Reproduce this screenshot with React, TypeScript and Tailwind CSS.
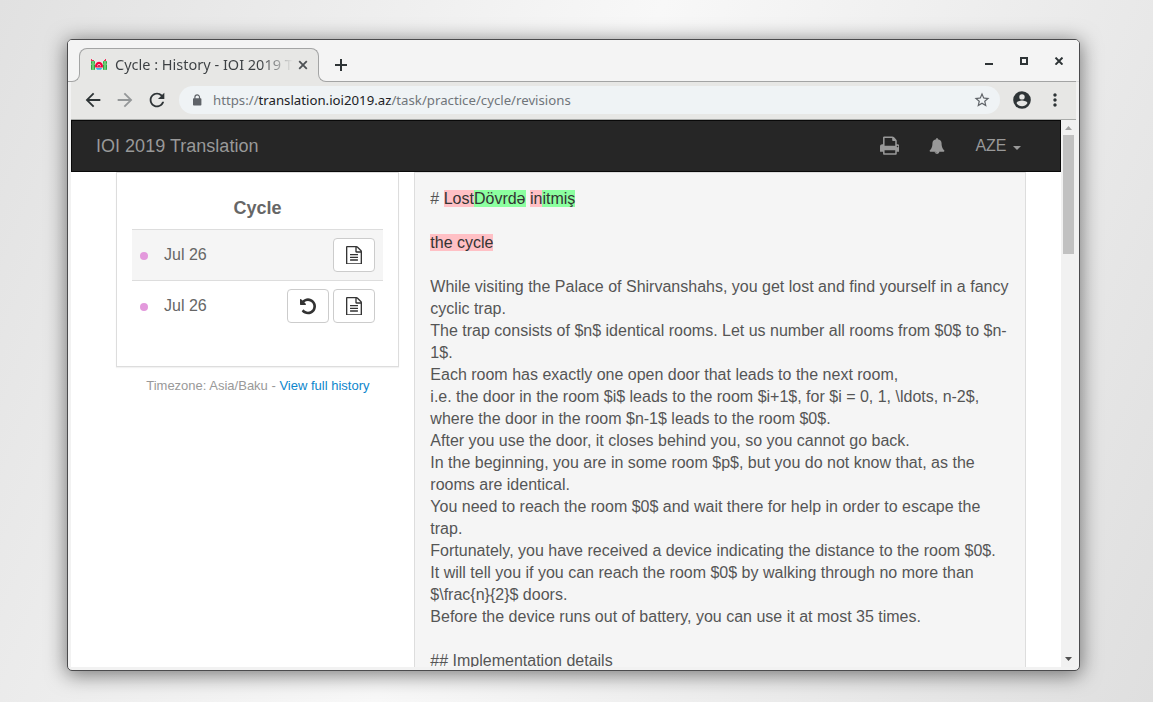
import React from "react";
import { MdArrowBack, MdArrowForward, MdMoreVert, MdRefresh, MdStarBorder } from "react-icons/md";

const FILE_TEXT =
  "M1468 380q28 28 48 76t20 88v1152q0 40-28 68t-68 28h-1344q-40 0-68-28t-28-68v-1600q0-40 28-68t68-28h896q40 0 88 20t76 48zM1024 136v376h376q-10-29-22-41l-313-313q-12-12-41-22zM1408 1664v-1024h-416q-40 0-68-28t-28-68v-416h-768v1536h1280zM384 800q0-14 9-23t23-9h704q14 0 23 9t9 23v64q0 14-9 23t-23 9h-704q-14 0-23-9t-9-23v-64zM1120 1024q14 0 23 9t9 23v64q0 14-9 23t-23 9h-704q-14 0-23-9t-9-23v-64q0-14 9-23t23-9h704zM1120 1280q14 0 23 9t9 23v64q0 14-9 23t-23 9h-704q-14 0-23-9t-9-23v-64q0-14 9-23t23-9h704z";
const UNDO =
  "M1536 896q0 156-61 298t-164 245-245 164-298 61q-172 0-327-72.5t-264-204.5q-7-10-6.5-22.5t8.5-20.5l137-138q10-9 25-9 16 2 23 12 73 95 179 147t225 52q104 0 198.5-40.5t163.5-109.5 109.5-163.5 40.5-198.5-40.5-198.5-109.5-163.5-163.5-109.5-198.5-40.5q-98 0-188 35.5t-160 101.5l137 138q31 30 14 69-17 40-59 40h-448q-26 0-45-19t-19-45v-448q0-42 40-59 39-17 69 14l130 129q107-101 244.5-156.5t284.5-55.5q156 0 298 61t245 164 164 245 61 298z";
const PRINT =
  "M384 1536h896v-256h-896v256zM384 896h896v-384h-160q-40 0-68-28t-28-68v-160h-640v640zM1536 960q0-26-19-45t-45-19-45 19-19 45 19 45 45 19 45-19 19-45zM1664 960v416q0 13-9.5 22.5t-22.5 9.5h-224v160q0 40-28 68t-68 28h-960q-40 0-68-28t-28-68v-160h-224q-13 0-22.5-9.5t-9.5-22.5v-416q0-79 56.5-135.5t135.5-56.5h64v-544q0-40 28-68t68-28h672q40 0 88 20t76 48l152 152q28 28 48 76t20 88v256h64q79 0 135.5 56.5t56.5 135.5z";
const BELL =
  "M912 1696q0-16-16-16-59 0-101.5-42.5t-42.5-101.5q0-16-16-16t-16 16q0 73 51.5 124.5t124.5 51.5q16 0 16-16zM1728 1408q0 52-38 90t-90 38h-448q0 106-75 181t-181 75-181-75-75-181h-448q-52 0-90-38t-38-90q50-42 91-88t85-119.5 74.5-158.5 50-206 19.5-260q0-152 117-282.5t307-158.5q-8-19-8-39 0-40 28-68t68-28 68 28 28 68q0 20-8 39 190 28 307 158.5t117 282.5q0 139 19.5 260t50 206 74.5 158.5 85 119.5 91 88z";

function Favicon() {
  return (
    <svg className="mt-[9px] h-[13px] w-[16px] shrink-0" viewBox="0 0 16 13">
      <path d="M0 3h4v9H0zM12 3h4v9h-4z" fill="#6ccb74" />
      <path d="M.5 3.5v2M3.5 3.5v2M.5 7v4.5M3.5 7v4.5M12.5 3.5v2M15.5 3.5v2M12.5 7v4.5M15.5 7v4.5" stroke="#2fa544" strokeWidth="1" />
      <path d="M0 1h1v2H0zM1 2h2v1H1zM13 2h2v1h-2zM14 1h1v2h-1z" fill="#f0305a" />
      <path d="M4.3 9.6a4 4.2 0 1 1 7.4 0z" fill="#f5003d" />
      <path d="M4.8 10h6.4L10 11.8H6z" fill="#35b6e6" />
      <circle cx="8" cy="7.6" r="1.6" fill="#ffe3ea" />
      <path d="M7.2 7h1.6v2H7.2z" fill="#b00a35" />
    </svg>
  );
}

function TabStrip() {
  return (
    <div className="flex h-[42px] shrink-0 items-end rounded-t-[4px] bg-[#f4f4f4]">
      <div className="relative z-10 -mr-px h-[9px] w-[12px] bg-[#e7e7e5]">
        <div className="h-full w-full rounded-br-[8px] border-r border-b border-[#a3a4a4] bg-[#f4f4f4]" />
      </div>
      <div className="flex h-[34px] w-[240px] items-start rounded-t-[8px] border border-b-0 border-[#a3a4a4] bg-[#e7e7e5] pl-[11px]">
        <Favicon />
        <div className="ml-[8px] h-[30px] w-[178px] bg-gradient-to-r from-[#3c4043] from-[82%] to-[#3c4043]/0 to-100% bg-clip-text font-['Noto_Sans'] text-[14.5px] leading-[30px] whitespace-nowrap text-transparent">
          Cycle : History - IOI 2019 T
        </div>
        <svg className="mt-[11px] ml-[5px] h-[10px] w-[10px]" viewBox="0 0 10 10">
          <path d="M1.2 1.2l7.6 7.6M8.8 1.2l-7.6 7.6" stroke="#4d5154" strokeWidth="1.8" />
        </svg>
      </div>
      <div className="relative z-10 -ml-px h-[9px] w-[12px] bg-[#e7e7e5]">
        <div className="h-full w-full rounded-bl-[8px] border-b border-l border-[#a3a4a4] bg-[#f4f4f4]" />
      </div>
      <div className="flex h-full flex-1 items-start border-b border-[#a3a4a4]">
        <svg className="mt-[19px] ml-[5px] h-[12px] w-[12px]" viewBox="0 0 12 12">
          <path d="M6 0v12M0 6h12" stroke="#2e3436" strokeWidth="2" />
        </svg>
        <div className="flex-1" />
        <svg className="mt-[17px] h-[8px] w-[78px]" viewBox="0 0 78 8">
          <path d="M0 7h8" stroke="#2e3436" strokeWidth="2" />
          <rect x="36" y="1" width="6" height="6" fill="none" stroke="#2e3436" strokeWidth="2" />
          <path d="M70.5 .6l7 7M77.5 .6l-7 7" stroke="#2e3436" strokeWidth="2" />
        </svg>
        <div className="w-[13px]" />
      </div>
      <div className="h-px w-[3px] bg-[#e0e0e0]" />
    </div>
  );
}

function Toolbar() {
  return (
    <div className="mx-[3px] flex h-[38px] shrink-0 items-start border-b border-[#a9aba9] bg-[#e7e7e5] pt-[4px]">
      <div className="flex h-[28px] flex-1 items-center text-[#2e3436]">
        <MdArrowBack className="ml-[11px] h-[22px] w-[22px]" />
        <MdArrowForward className="ml-[10px] h-[22px] w-[22px] text-[#949798]" />
        <MdRefresh className="ml-[10px] h-[22px] w-[22px]" />
        <div className="ml-[11px] flex h-[28px] w-[821px] items-center rounded-full bg-[#eff3f5] text-[#5f6368]">
          <svg className="-mt-px ml-[13px] h-[12px] w-[10px]" viewBox="0 0 10 12">
            <rect x="1" y="4.2" width="8.4" height="7.3" rx="0.8" fill="currentColor" />
            <path d="M2.9 5V3.2a2.3 2.3 0 0 1 4.6 0V5" fill="none" stroke="currentColor" strokeWidth="1.2" />
          </svg>
          <div className="ml-[11px] font-['Noto_Sans'] text-[13.23px] leading-[28px] whitespace-nowrap text-[#70757a]">
            https://<span className="text-[#202124]">translation.ioi2019.az</span>/task/practice/cycle/revisions
          </div>
          <MdStarBorder className="mr-[9px] ml-auto h-[18px] w-[18px]" />
        </div>
        <svg className="ml-[13px] h-[18px] w-[18px]" viewBox="0 0 18 18">
          <circle cx="9" cy="9" r="8.8" fill="currentColor" />
          <circle cx="9" cy="5.9" r="2.7" fill="#e7e7e5" />
          <path d="M3.6 12.3c0-1.8 3.6-2.7 5.4-2.7s5.4.9 5.4 2.7c-1.2 1.8-3.2 2.9-5.4 2.9s-4.200-1.100-5.400-2.900z" fill="#e7e7e5" />
        </svg>
        <MdMoreVert className="ml-[14px] h-[20px] w-[20px]" />
      </div>
    </div>
  );
}

function NavBar() {
  return (
    <div className="flex h-[52px] shrink-0 items-center border border-[#090909] bg-[#262626] text-[#999]">
      <div className="ml-[24px] text-[18px] tracking-[0.02px]">IOI 2019 Translation</div>
      <svg className="ml-auto h-[21.33px] w-[19.8px]" viewBox="0 0 1664 1792" fill="currentColor">
        <path d={PRINT} />
      </svg>
      <svg className="ml-[30px] h-[16px] w-[16px]" viewBox="0 0 1792 1792" fill="currentColor">
        <path d={BELL} />
      </svg>
      <div className="ml-[30px] text-[16px]">AZE</div>
      <svg className="mt-[3px] mr-[39px] ml-[6.500px] h-[4px] w-[8px]" viewBox="0 0 8 4" fill="currentColor">
        <path d="M0 0h8l-4 4z" />
      </svg>
    </div>
  );
}

function IconButton({ path }: { path: string }) {
  return (
    <button className="flex h-[34px] w-[42px] items-center justify-center rounded-[4px] border border-[#ccc] bg-white text-[#333]">
      <svg className="h-[18.67px] w-[16px]" viewBox="0 0 1536 1792" fill="currentColor">
        <path d={path} />
      </svg>
    </button>
  );
}

function Revision({ shaded, revert }: { shaded?: boolean; revert?: boolean }) {
  return (
    <div
      className={
        shaded
          ? "flex h-[51px] items-center border-t border-[#ddd] bg-[#f5f5f5] px-[8px]"
          : "flex h-[51px] items-center border-t border-[#ddd] px-[8px]"
      }
    >
      <div className="mt-[2px] h-[8px] w-[8px] rounded-full bg-[#e399dc]" />
      <div className="ml-[16px] flex-1 text-[16px] text-[#666]">Jul 26</div>
      <div className="flex gap-[4px]">
        {revert && <IconButton path={UNDO} />}
        <IconButton path={FILE_TEXT} />
      </div>
    </div>
  );
}

const BODY = [
  "While visiting the Palace of Shirvanshahs, you get lost and find yourself in a fancy",
  "cyclic trap.",
  "The trap consists of $n$ identical rooms. Let us number all rooms from $0$ to $n-",
  "1$.",
  "Each room has exactly one open door that leads to the next room,",
  "i.e. the door in the room $i$ leads to the room $i+1$, for $i = 0, 1, \\ldots, n-2$,",
  "where the door in the room $n-1$ leads to the room $0$.",
  "After you use the door, it closes behind you, so you cannot go back.",
  "In the beginning, you are in some room $p$, but you do not know that, as the",
  "rooms are identical.",
  "You need to reach the room $0$ and wait there for help in order to escape the",
  "trap.",
  "Fortunately, you have received a device indicating the distance to the room $0$.",
  "It will tell you if you can reach the room $0$ by walking through no more than",
  "$\\frac{n}{2}$ doors.",
  "Before the device runs out of battery, you can use it at most 35 times.",
  "",
  "## Implementation details",
];

function Diff() {
  return (
    <div className="ml-[15px] h-[600px] w-[612px] border border-[#ddd] bg-[#f5f5f5] pt-[15px] pl-[15.33px] text-[16px] leading-[22px] whitespace-pre text-[#555]">
      <div>
        # <del className="bg-[#ffc0c5] text-[#333] no-underline">Lost</del>
        <ins className="bg-[#8cffa0] text-[#333] no-underline">Dövrdə</ins>{" "}
        <del className="bg-[#ffc0c5] text-[#333] no-underline">in</del>
        <ins className="bg-[#8cffa0] text-[#333] no-underline">itmiş</ins>
      </div>
      <div className="mt-[22px] mb-[22px]">
        <del className="bg-[#ffc0c5] text-[#333] no-underline">the cycle</del>
      </div>
      {BODY.map((line, i) => (
        <div key={i} className="h-[22px]">
          {line}
        </div>
      ))}
    </div>
  );
}

function ScrollBar() {
  return (
    <div className="flex w-[15px] flex-col items-center bg-[#f1f1f1]">
      <svg className="mt-[6px] h-[4px] w-[7px]" viewBox="0 0 7 4">
        <path d="M0 4L3.5 0 7 4z" fill="#a3a3a3" />
      </svg>
      <div className="mt-[5px] h-[119px] w-[11px] bg-[#c1c1c1]" />
      <svg className="mt-auto mb-[6px] h-[4px] w-[7px]" viewBox="0 0 7 4">
        <path d="M0 0h7L3.5 4z" fill="#505050" />
      </svg>
    </div>
  );
}

export default function App() {
  return (
    <div className="h-[702px] w-[1153px] overflow-hidden bg-[linear-gradient(112.5deg,#e1e1e1_0%,#f8f8f8_46%,#dfdfdf_100%)] pt-[39px] pl-[67px] font-['Liberation_Sans',Arial,sans-serif]">
      <div className="flex h-[632px] w-[1013px] flex-col rounded-[5px] border border-[#4b4b4d] bg-[#f2f2f2] shadow-[0_3px_20px_1px_rgba(0,0,0,0.5)]">
        <TabStrip />
        <Toolbar />
        <div className="mx-[3px] flex h-[547px] overflow-hidden bg-white">
          <div className="flex w-[990px] flex-col overflow-hidden">
            <NavBar />
            <div className="flex pl-[45px]">
              <div className="w-[283px]">
                <div className="h-[195px] border border-[#ddd] px-[15px] pt-[22px] shadow-[0_1px_1px_rgba(0,0,0,0.05)]">
                  <div className="h-[34px] text-center text-[18px] leading-[26px] font-bold text-[#666]">Cycle</div>
                  <Revision shaded />
                  <Revision revert />
                </div>
                <div className="mt-[9px] pl-[0.7px] text-center text-[13px] leading-[20px] text-[#999]">
                  Timezone: Asia/Baku - <a className="text-[#0d86cc]">View full history</a>
                </div>
              </div>
              <Diff />
            </div>
          </div>
          <ScrollBar />
        </div>
      </div>
    </div>
  );
}
